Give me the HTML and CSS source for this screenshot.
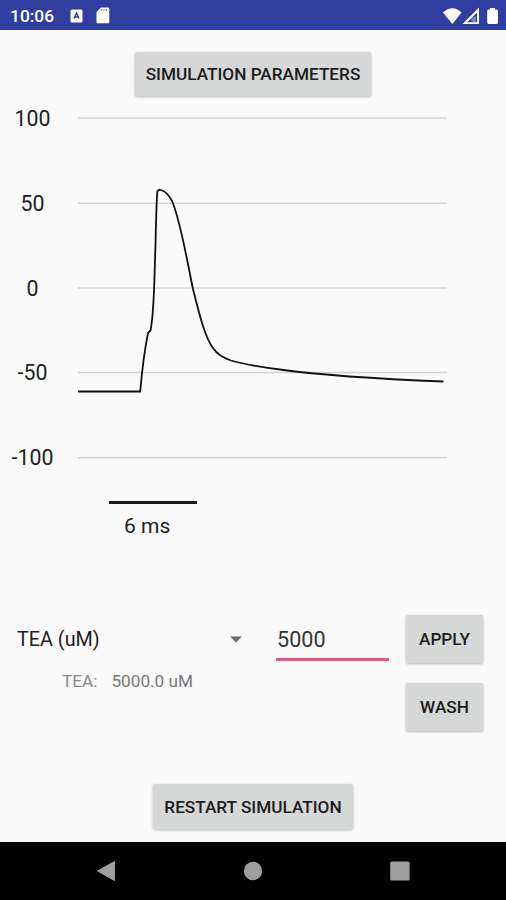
FILE: index.html
```html
<!DOCTYPE html>
<html lang="en">
<head>
  <meta charset="UTF-8">
  <meta name="viewport" content="width=device-width, initial-scale=1.0">
  <title>Action Potential Simulation</title>
  <link rel="stylesheet" href="styles.css">
</head>
<body>
  <header class="status-bar">
    <span class="clock">10:06</span>
    <svg class="icon-app" width="13" height="14" viewBox="0 0 13 14">
      <rect x="0.5" y="0.5" width="12" height="13" rx="1.5" fill="#fff"/>
      <path d="M4 9.5 L6.5 4 L9 9.5 M5 8 H8" fill="none" stroke="#303f9f" stroke-width="1.5"/>
    </svg>
    <svg class="icon-card" width="14" height="17" viewBox="0 0 14 17">
      <path d="M5 0.5 H12 Q13.3 0.5 13.3 1.8 V15 Q13.3 16.3 12 16.3 H1.8 Q0.5 16.3 0.5 15 V5 Z" fill="#fff"/>
      <path d="M5.5 2 V4 M8 2 V4 M10.5 2 V4" stroke="#7d87c3" stroke-width="1.2"/>
    </svg>
    <svg class="icon-signals" width="58" height="18" viewBox="0 0 58 18">
      <path d="M1 5.6 Q10.3 -3.2 19.6 5.6 L10.3 17 Z" fill="#fff"/>
      <path d="M37 0.5 V17 H20.5 Z M35 5.5 L25.2 15.2 H35 Z" fill="#fff" fill-rule="evenodd"/>
      <path d="M34 9 V15 H29.5 V11 Z" fill="#fff" opacity="0.35"/>
      <path d="M48 1 H53 V2.5 H54.5 Q56 2.5 56 4 V15.5 Q56 17 54.5 17 H46.7 Q45.2 17 45.2 15.5 V4 Q45.2 2.5 46.7 2.5 H48 Z" fill="#fff"/>
    </svg>
  </header>

  <main class="screen">
    <button class="btn btn-params">Simulation Parameters</button>

    <section class="chart">
      <div class="axis">
        <span>100</span>
        <span>50</span>
        <span>0</span>
        <span>-50</span>
        <span>-100</span>
      </div>
      <svg class="plot" width="370" height="342" viewBox="77 117 370 342">
        <g fill="none" stroke="#d3d3d3" stroke-width="1.5">
          <path d="M78 118 H447"/>
          <path d="M78 203.2 H447"/>
          <path d="M78 288 H447"/>
          <path d="M78 372.6 H447"/>
          <path d="M78 457.7 H447"/>
        </g>
        <path class="trace" d="M78 391.5 H140.2 C142 371 145 348 148 333 L150.5 330.5 C154.5 311 154 284 155.5 245 C156 222 156.5 201 157.3 192 Q158 189 161 190 C166 191.5 169 195 172 201 C180 219 186 255 193 289 C199 313 205 338 213 348 C217 354 223 358 231 360.5 C245 364.5 260 367 280 369.5 C320 375 380 379 443.5 381.5"/>
      </svg>
    </section>

    <div class="scale">
      <div class="scale-line"></div>
      <span>6 ms</span>
    </div>

    <section class="controls">
      <div class="spinner">
        <span>TEA (uM)</span>
        <svg width="12" height="7" viewBox="0 0 12 7"><path d="M0 0.5 H12 L6 6.5 Z" fill="#6b6b6b"/></svg>
      </div>
      <input class="dose" type="text" value="5000">
      <button class="btn">Apply</button>
      <p class="current"><span>TEA:</span><span class="current-value">5000.0 uM</span></p>
      <button class="btn btn-wash">Wash</button>
    </section>

    <button class="btn btn-restart">Restart Simulation</button>
  </main>

  <nav class="nav-bar">
    <svg width="20" height="22" viewBox="0 0 20 22"><path d="M18.5 1.5 V20.5 L1.5 11 Z" fill="#9e9e9e" stroke="#9e9e9e" stroke-linejoin="round"/></svg>
    <svg width="20" height="20" viewBox="0 0 20 20"><circle cx="10" cy="10" r="9.2" fill="#9e9e9e"/></svg>
    <svg width="20" height="20" viewBox="0 0 20 20"><rect x="0.2" y="0.5" width="19.4" height="19" rx="1.5" fill="#9e9e9e"/></svg>
  </nav>
</body>
</html>
```
FILE: styles.css
```css
* {
  box-sizing: border-box;
}
body {
  margin: 0;
  height: 900px;
  display: flex;
  flex-direction: column;
  background: #fafafa;
  color: #212121;
  font-family: Roboto, sans-serif;
}
.status-bar {
  height: 30px;
  display: flex;
  align-items: center;
  padding: 1px 6px 0 10px;
  background: #303f9f;
  color: white;
}
.clock {
  width: 60px;
  font-size: 17.4px;
  font-weight: 500;
}
.icon-card {
  margin-left: 13px;
}
.icon-signals {
  margin-left: auto;
}
.screen {
  flex: 1;
  display: flex;
  flex-direction: column;
}
.btn {
  height: 48px;
  padding: 0;
  border: none;
  border-radius: 2px;
  background: #d6d7d7;
  color: #1c1c1c;
  font-family: inherit;
  font-size: 17.2px;
  font-weight: 500;
  text-transform: uppercase;
  box-shadow: 0 1px 3px rgba(0,0,0,0.28);
}
.btn-params {
  align-self: center;
  width: 236px;
  height: 44px;
  margin-top: 22px;
}
.chart {
  display: flex;
  margin-top: 21px;
}
.axis {
  width: 65px;
  height: 342px;
  margin-right: 12px;
  display: flex;
  flex-direction: column;
  justify-content: space-between;
  text-align: center;
  font-size: 21.3px;
  line-height: 3px;
}
.trace {
  fill: none;
  stroke: #111;
  stroke-width: 1.8;
}
.scale {
  width: 88px;
  margin: 42px 0 0 109px;
  font-size: 21px;
  line-height: 24px;
}
.scale-line {
  height: 3px;
  margin-bottom: 10px;
  background: #1a1a1a;
}
.scale span {
  margin-left: 15px;
}
.controls {
  display: grid;
  grid-template-columns: 242px 113px 77px;
  grid-template-rows: 48px 48px;
  column-gap: 17px;
  row-gap: 20px;
  margin: 77px 0 0 17px;
}
.spinner {
  display: flex;
  align-items: center;
  justify-content: space-between;
  padding-right: 17px;
  font-size: 19.8px;
}
.dose {
  width: 113px;
  height: 46px;
  padding: 5px 1px 0;
  border: none;
  border-bottom: 3px solid #ec5287;
  background: none;
  color: #333;
  font-family: inherit;
  font-size: 21.6px;
  outline: none;
}
.current {
  grid-column: 1 / 3;
  margin: -12px 0 0 45px;
  color: #8a8a8a;
  font-size: 17.2px;
  line-height: 20px;
}
.current-value {
  margin-left: 14px;
  color: #777;
}
.btn-restart {
  align-self: center;
  width: 200px;
  height: 45px;
  margin-top: 53px;
}
.nav-bar {
  height: 58px;
  display: flex;
  align-items: center;
  justify-content: space-between;
  padding: 0 96px;
  background: black;
}
```
